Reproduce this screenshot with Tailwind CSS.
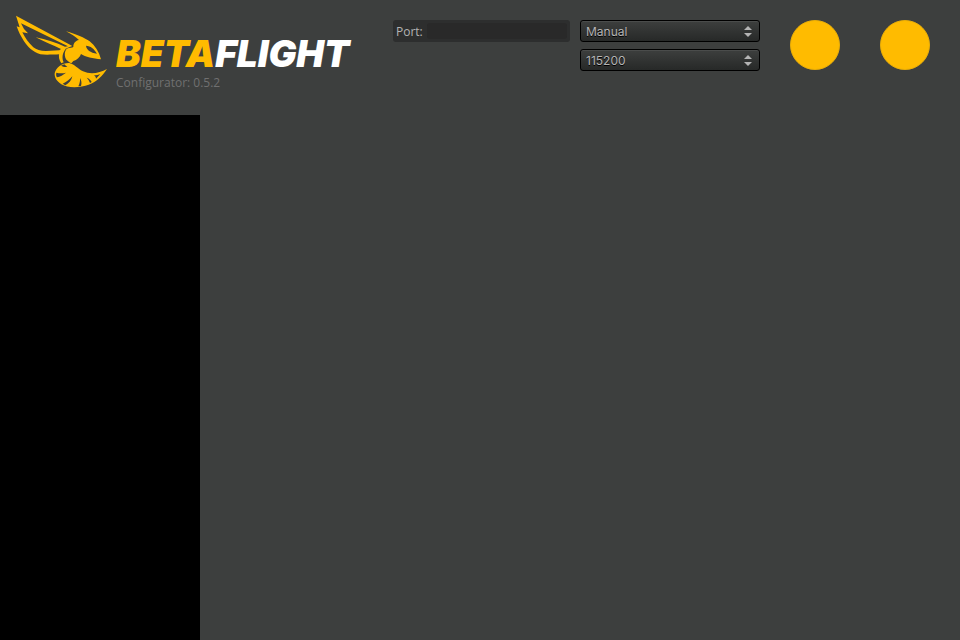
<!DOCTYPE html>
<html lang="en">
<head>
<meta charset="utf-8">
<title>Betaflight Configurator</title>
<script src="https://cdn.jsdelivr.net/npm/@tailwindcss/browser@4"></script>
</head>
<body class="flex min-h-screen flex-col bg-[#3d3f3e] font-['Open_Sans',sans-serif] text-xs">
<header class="flex min-h-[115px] items-start">
  <div class="flex flex-1 items-start pt-[10px] pl-[10px]">
    <svg class="h-[84px] w-[100px] shrink-0" viewBox="0 0 300 252" role="img" aria-label="Bee" fill="#ffbb00">
      <path fill-rule="evenodd" d="M18 17 L187 108 C176 112 167 115 160 121 L149 133 C125 134 105 135 91 133 C68 126 53 111 42 94 C32 78 25 64 20 49 L29 52 Z M33 40 L42 57 L54 70 L37 67 C45 83 56 99 70 112 C79 119 91 123 108 123 L148 121 L153 117 C128 105 101 95 77 82 C108 88 139 99 165 110 L174 109 Z"/>
      <path fill-rule="evenodd" d="M168 64 C197 72 225 84 239 94 C255 107 267 125 273 148 C249 145 226 141 213 132 C210 142 201 150 190 153 L184 160 C176 155 168 150 166 143 C163 133 164 123 170 116 C179 113 187 114 190 111 C190 101 195 92 207 90 C196 80 183 72 168 64 Z M228 107 C229 119 241 128 261 131 C252 116 242 108 228 107 Z"/>
      <path d="M148 130 C152 121 158 116 167 117 C157 129 155 144 161 157 L154 160 C147 150 145 139 148 130 Z"/>
      <path d="M134 190 C138 171 157 158 178 159 C195 163 202 176 219 184 C241 194 268 190 291 177 C277 197 261 216 236 224 C212 233 175 235 154 223 C140 214 133 203 134 190 Z"/>
      <g fill="#3d3f3e">
        <path d="M153 167 L163 163 L172 171 C164 172 158 170 153 167 Z"/>
        <path d="M139 188 C149 190 158 190 168 188 C160 195 150 200 141 202 C138 198 138 193 139 188 Z"/>
        <path d="M187 199 C185 210 177 220 166 226 L158 221 C169 216 179 209 187 199 Z"/>
        <path d="M210 204 C214 211 216 219 213 228 L205 229 C209 220 211 212 210 204 Z"/>
        <path d="M230 203 C238 206 243 211 245 216 L240 219 C238 213 235 208 230 203 Z"/>
        <path d="M252 196 C260 196 266 194 271 192 L258 206 C258 202 256 199 252 196 Z"/>
      </g>
    </svg>
    <div class="pt-[26px] pl-[6px]">
      <h1 class="font-['Inter',sans-serif] text-[37px] leading-[36px] font-black whitespace-nowrap text-white italic"><span class="text-[#ffbb00]">BETA</span>FLIGHT</h1>
      <p class="pt-[3px] leading-4 text-[#707070]">Configurator: 0.5.2</p>
    </div>
  </div>
  <div class="flex gap-[10px] pt-5 pr-[30px] text-[#b4b4b4]">
    <div class="flex h-[22px] w-[177px] items-center gap-1 rounded-[3px] bg-[#2d2e2e] px-[3px]">
      <label for="port" class="pt-[2px]">Port:</label>
      <input id="port" type="text" class="h-4 min-w-0 flex-1 rounded-[3px] bg-[#292929] px-1 outline-none">
    </div>
    <div class="flex w-[180px] flex-col gap-[7px] font-['Inter',sans-serif]">
      <div class="relative">
        <select aria-label="Port selection" class="block h-[22px] w-full appearance-none rounded-[3px] border border-black bg-linear-to-b from-[#3d3f3e] to-[#272928] px-[5px] pt-[2px] text-xs text-[#b4b4b4] shadow-[inset_0_1px_0_#4a4c4b] text-shadow-[0_1px_0_#000]"><option>Manual</option></select>
        <svg class="pointer-events-none absolute top-[6px] right-2 h-[11px] w-2" viewBox="0 0 8 11" fill="#b4b4b4" aria-hidden="true"><path d="M0 4 4 0 8 4ZM0 7H8L4 11Z"/></svg>
      </div>
      <div class="relative">
        <select aria-label="Baud rate" class="block h-[22px] w-full appearance-none rounded-[3px] border border-black bg-linear-to-b from-[#3d3f3e] to-[#272928] px-[5px] pt-[2px] text-xs text-[#b4b4b4] shadow-[inset_0_1px_0_#4a4c4b] text-shadow-[0_1px_0_#000]"><option>115200</option></select>
        <svg class="pointer-events-none absolute top-[6px] right-2 h-[11px] w-2" viewBox="0 0 8 11" fill="#b4b4b4" aria-hidden="true"><path d="M0 4 4 0 8 4ZM0 7H8L4 11Z"/></svg>
      </div>
    </div>
    <div class="flex gap-10 pl-5">
      <button type="button" aria-label="Update firmware" class="size-[50px] rounded-full border border-[#eaae08] bg-[#ffbb00]"></button>
      <button type="button" aria-label="Connect" class="size-[50px] rounded-full border border-[#eaae08] bg-[#ffbb00]"></button>
    </div>
  </div>
</header>
<div class="flex flex-1">
  <nav class="w-[200px] bg-black" aria-label="Tabs"></nav>
  <main class="flex-1"></main>
</div>
</body>
</html>
